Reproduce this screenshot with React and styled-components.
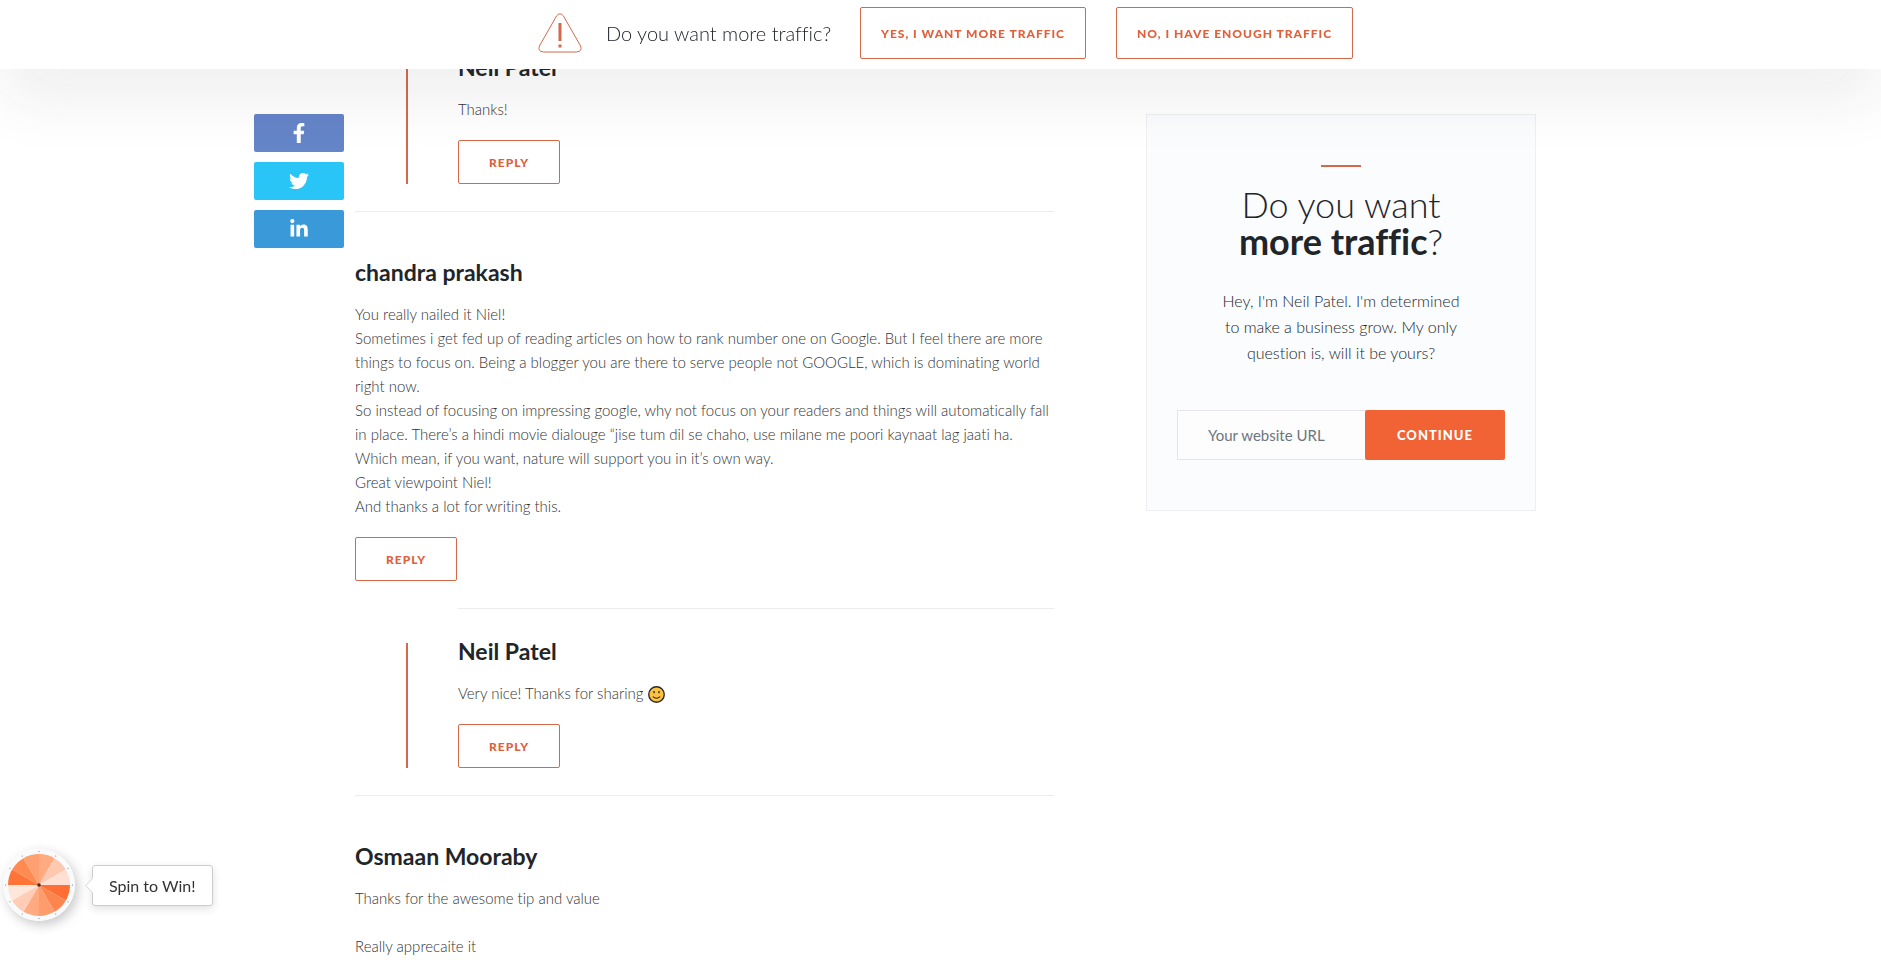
import styled, { createGlobalStyle } from 'styled-components';
import { FaFacebookF, FaTwitter, FaLinkedinIn } from 'react-icons/fa';

const GlobalStyle = createGlobalStyle`
  * {
    box-sizing: border-box;
  }
  body {
    margin: 0;
    background: #fff;
    color: #212529;
    font-family: Lato, 'Open Sans', sans-serif;
    font-size: 15px;
    font-weight: 300;
    font-variant-ligatures: none;
    line-height: 24px;
  }
`;

const TopBar = styled.header`
  position: fixed;
  top: 0;
  left: 0;
  right: 0;
  z-index: 10;
  padding: 7px 0 10px 10px;
  display: flex;
  justify-content: center;
  align-items: center;
  background: #fff;
  box-shadow: 0 30px 60px rgba(36, 36, 56, .08);
`;

const TopBarText = styled.p`
  margin: 0 29px 0 24px;
  font-size: 20px;
`;

const WarningIcon = styled.svg`
  width: 44px;
  height: 40px;
`;

const OutlineButton = styled.button`
  height: ${({ $large }) => ($large ? '52px' : '44px')};
  padding: ${({ $large }) => ($large ? '0 20px' : '0 30px')};
  background: transparent;
  border: 1px solid #d4694a;
  border-radius: 2px;
  color: #e0603c;
  font-family: inherit;
  font-size: 12px;
  font-weight: 900;
  letter-spacing: 1px;
  text-transform: uppercase;
  cursor: pointer;
  & + & {
    margin-left: 30px;
  }
`;

const Page = styled.div`
  max-width: 1373px;
  margin: 0 auto;
  padding-right: 91px;
  display: flex;
  align-items: flex-start;
`;

const ShareRail = styled.nav`
  position: sticky;
  top: 114px;
  flex: 0 0 90px;
  margin-top: 114px;
  display: flex;
  flex-direction: column;
  gap: 10px;
`;

const ShareLink = styled.a`
  height: 38px;
  display: flex;
  justify-content: center;
  align-items: center;
  border-radius: 2px;
  background: ${({ $color }) => $color};
  color: #fff;
  font-size: 20px;
`;

const Comments = styled.main`
  flex: 1;
  min-width: 0;
  margin: 59px 92px 0 11px;
`;

const Reply = styled.article`
  margin-left: 51px;
  padding-left: 50px;
  border-left: 2px solid #d4694a;
`;

const Divider = styled.hr`
  height: 1px;
  margin: ${({ $nested }) => ($nested ? '27px 0 34px 103px' : '27px 0 52px')};
  border: 0;
  background: #ebecee;
`;

const Author = styled.h3`
  margin: 0 0 22px;
  font-size: 23px;
  font-weight: 700;
  line-height: 16px;
`;

const Body = styled.p`
  margin: 0 0 19px;
  color: #333;
`;

const Smiley = styled.svg`
  width: 17px;
  height: 17px;
  vertical-align: -4px;
`;

const Sidebar = styled.aside`
  position: sticky;
  top: 114px;
  flex: none;
  width: 390px;
  margin-top: 114px;
  padding: 50px 30px;
  border: 1px solid #eeeff2;
  background: #fbfcfe;
  text-align: center;
`;

const Accent = styled.div`
  width: 40px;
  height: 2px;
  margin: 0 auto 19px;
  background: #d4694a;
`;

const CardTitle = styled.h2`
  margin: 0 0 28px;
  font-size: 36px;
  font-weight: 300;
  line-height: 37px;
  strong {
    font-weight: 700;
  }
`;

const CardText = styled.p`
  margin: 0 40px 44px;
  font-size: 16px;
  line-height: 26px;
`;

const UrlForm = styled.form`
  display: flex;
  height: 50px;
`;

const UrlInput = styled.input`
  flex: 1;
  min-width: 0;
  padding: 0 30px;
  border: 1px solid #e4e6ea;
  border-right: 0;
  background: #fdfdfe;
  font-family: inherit;
  font-size: 15px;
  &::placeholder {
    color: #6c757d;
    opacity: 1;
  }
`;

const ContinueButton = styled.button`
  flex: 0 0 140px;
  border: 0;
  border-radius: 2px;
  background: #f16334;
  color: #fff;
  font-family: inherit;
  font-size: 13px;
  font-weight: 900;
  letter-spacing: 1px;
  text-transform: uppercase;
  cursor: pointer;
`;

const SpinWidget = styled.div`
  position: fixed;
  left: 3px;
  bottom: 42px;
  display: flex;
  align-items: center;
  gap: 17px;
`;

const Wheel = styled.svg`
  width: 72px;
  height: 72px;
  border-radius: 50%;
  box-shadow: 3px 4px 12px rgba(0, 0, 0, .22);
`;

const SpinBubble = styled.button`
  position: relative;
  height: 41px;
  padding: 0 16px;
  border: 1px solid #ccc;
  border-radius: 3px;
  background: #fff;
  box-shadow: 0 3px 8px rgba(0, 0, 0, .12);
  color: #333;
  font-family: inherit;
  font-size: 16px;
  cursor: pointer;
  &::before {
    content: '';
    position: absolute;
    left: -6px;
    top: 14px;
    width: 10px;
    height: 10px;
    border-left: 1px solid #ddd;
    border-bottom: 1px solid #ddd;
    background: #fff;
    transform: rotate(45deg);
  }
`;

const sliceColors = [
  '#ffaa80', '#ffc8b0', '#ffe0d3', '#ff6f35', '#ff854f', '#ff9c6c',
  '#ffaa80', '#ffcdb6', '#ffe6da', '#ff7538', '#ff8a52', '#ffa071',
];

const pointAt = (step, radius) => {
  const angle = ((step * 30 - 90) * Math.PI) / 180;
  return [36 + radius * Math.cos(angle), 36 + radius * Math.sin(angle)];
};

const slicePath = (index) =>
  `M36 36L${pointAt(index, 31).join(' ')}A31 31 0 0 1 ${pointAt(index + 1, 31).join(' ')}Z`;

export default function App() {
  return (
    <>
      <GlobalStyle />
      <TopBar>
        <WarningIcon viewBox="0 0 44 40" fill="none">
          <path d="M18.6 2.900Q22 -1.300 25.400 2.900L42.600 33Q44.600 38.500 38.500 39H5.500Q-.6 38.500 1.400 33Z" stroke="#d4694a" />
          <path d="M22 10v18M22 31.500v3" stroke="#d4694a" strokeWidth="3" />
        </WarningIcon>
        <TopBarText>Do you want more traffic?</TopBarText>
        <OutlineButton $large>Yes, I want more traffic</OutlineButton>
        <OutlineButton $large>No, I have enough traffic</OutlineButton>
      </TopBar>

      <Page>
        <ShareRail aria-label="Share">
          <ShareLink href="#facebook" aria-label="Facebook" $color="#6585c9"><FaFacebookF /></ShareLink>
          <ShareLink href="#twitter" aria-label="Twitter" $color="#29c5f6"><FaTwitter /></ShareLink>
          <ShareLink href="#linkedin" aria-label="LinkedIn" $color="#3a99d9"><FaLinkedinIn /></ShareLink>
        </ShareRail>

        <Comments>
          <Reply>
            <Author>Neil Patel</Author>
            <Body>Thanks!</Body>
            <OutlineButton>Reply</OutlineButton>
          </Reply>
          <Divider />

          <article>
            <Author>chandra prakash</Author>
            <Body>
              You really nailed it Niel!<br />
              Sometimes i get fed up of reading articles on how to rank number one on Google. But I feel there are more things to focus on. Being a blogger you are there to serve people not GOOGLE, which is dominating world right now.<br />
              So instead of focusing on impressing google, why not focus on your readers and things will automatically fall in place. There’s a hindi movie dialouge “jise tum dil se chaho, use milane me poori kaynaat lag jaati ha.<br />
              Which mean, if you want, nature will support you in it’s own way.<br />
              Great viewpoint Niel!<br />
              And thanks a lot for writing this.
            </Body>
            <OutlineButton>Reply</OutlineButton>
          </article>
          <Divider $nested />
          <Reply>
            <Author>Neil Patel</Author>
            <Body>
              Very nice! Thanks for sharing{' '}
              <Smiley viewBox="0 0 16 16">
                <circle cx="8" cy="8" r="7.300" fill="#fdc23e" stroke="#2b2a29" strokeWidth="1.300" />
                <path d="M5.700 4.600v2.300M10.300 4.600v2.300" stroke="#2b2a29" strokeWidth="1.300" />
                <path d="M4.500 10Q8 13 11.500 10" fill="none" stroke="#2b2a29" />
              </Smiley>
            </Body>
            <OutlineButton>Reply</OutlineButton>
          </Reply>
          <Divider />

          <article>
            <Author>Osmaan Mooraby</Author>
            <Body>
              Thanks for the awesome tip and value<br />
              <br />
              Really apprecaite it
            </Body>
          </article>
        </Comments>

        <Sidebar>
          <Accent />
          <CardTitle>Do you want<br /><strong>more traffic</strong>?</CardTitle>
          <CardText>Hey, I'm Neil Patel. I'm determined to make a business grow. My only question is, will it be yours?</CardText>
          <UrlForm>
            <UrlInput type="text" placeholder="Your website URL" aria-label="Your website URL" />
            <ContinueButton type="button">Continue</ContinueButton>
          </UrlForm>
        </Sidebar>
      </Page>

      <SpinWidget>
        <Wheel viewBox="0 0 72 72">
          <circle cx="36" cy="36" r="36" fill="#f8fafc" />
          {sliceColors.map((color, i) => {
            const [cx, cy] = pointAt(i, 33.5);
            return (
              <g key={i}>
                <path d={slicePath(i)} fill={color} />
                <circle cx={cx} cy={cy} r=".6" fill="#777" />
              </g>
            );
          })}
          <circle cx="36" cy="36" r="1.800" fill="#4a2a1c" />
        </Wheel>
        <SpinBubble>Spin to Win!</SpinBubble>
      </SpinWidget>
    </>
  );
}
